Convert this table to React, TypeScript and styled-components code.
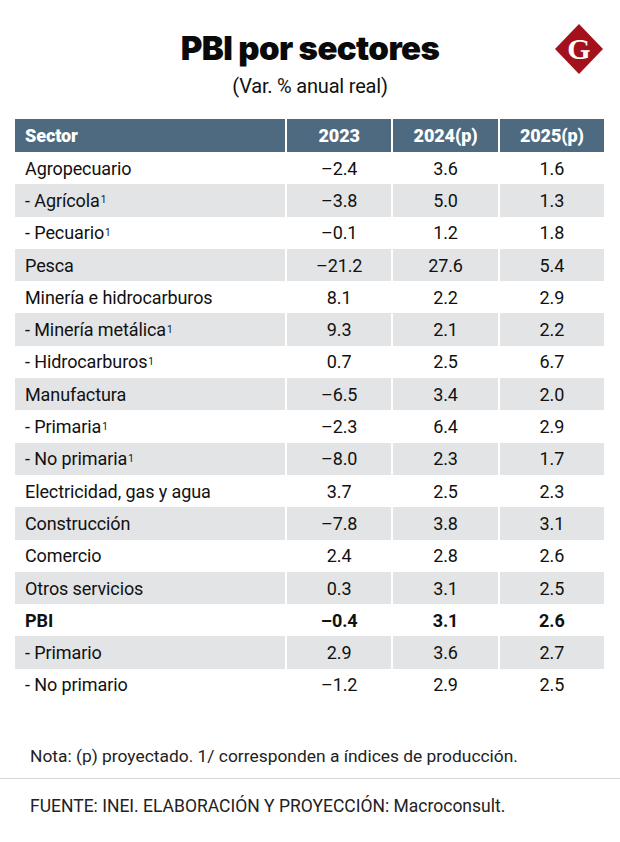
import React from "react";
import styled, { createGlobalStyle } from "styled-components";

const Global = createGlobalStyle`
  html, body { margin: 0; padding: 0; background: #fff; }
  body { font-family: Roboto, "Liberation Sans", sans-serif; color: #111; }
`;

const Page = styled.div`
  width: 620px;
  height: 842px;
  box-sizing: border-box;
  padding-top: 28px;
  display: flex;
  flex-direction: column;
`;

const Head = styled.header`
  position: relative;
  display: flex;
  flex-direction: column;
  align-items: center;
`;

const Title = styled.h1`
  margin: 0;
  font-family: Inter, Lato, "Liberation Sans", sans-serif;
  font-weight: 900;
  font-size: 33px;
  line-height: 40px;
  letter-spacing: -0.6px;
  color: #0a0a0a;
`;

const Subtitle = styled.div`
  margin-top: 6px;
  font-size: 20px;
  line-height: 24px;
  letter-spacing: -0.2px;
  color: #111;
`;

const Logo = styled.svg`
  position: absolute;
  right: 16px;
  top: -5px;
`;

const Table = styled.div`
  margin: 21px 16px 0 15px;
  display: flex;
  flex-direction: column;
`;

const Row = styled.div<{ $shade?: "head" | "gray" | "none" }>`
  display: grid;
  grid-template-columns: 270px 1fr 1fr 1fr;
  column-gap: 2px;
  height: ${(p) => (p.$shade === "head" ? "33px" : "32.3px")};
`;

const Cell = styled.div<{ $shade?: "head" | "gray" | "none"; $first?: boolean; $bold?: boolean }>`
  display: flex;
  align-items: center;
  justify-content: ${(p) => (p.$first ? "flex-start" : "center")};
  padding-left: ${(p) => (p.$first ? "10px" : "0")};
  background: ${(p) =>
    p.$shade === "head" ? "#4e6a81" : p.$shade === "gray" ? "#e2e4e6" : "transparent"};
  color: ${(p) => (p.$shade === "head" ? "#fff" : "#111")};
  font-size: 18px;
  font-weight: ${(p) => (p.$shade === "head" ? 900 : p.$bold ? 700 : 400)};
  letter-spacing: -0.1px;
  white-space: nowrap;
`;

const Sup = styled.sup`
  font-size: 10px;
  line-height: 0;
  vertical-align: 7px;
  margin-left: 1px;
`;

const Note = styled.p`
  margin: 45px 0 0 30px;
  font-size: 17.4px;
  line-height: 20px;
  color: #222;
`;

const Divider = styled.hr`
  margin: 12px 0 0 0;
  border: none;
  border-top: 1px solid #d6d6d6;
`;

const Source = styled.p`
  margin: 17px 0 0 30px;
  font-size: 17.5px;
  line-height: 20px;
  color: #222;
`;

type R = { s: string; sup?: boolean; v: [string, string, string]; bold?: boolean };

const rows: R[] = [
  { s: "Agropecuario", v: ["-2.4", "3.6", "1.6"] },
  { s: "- Agrícola", sup: true, v: ["-3.8", "5.0", "1.3"] },
  { s: "- Pecuario", sup: true, v: ["-0.1", "1.2", "1.8"] },
  { s: "Pesca", v: ["-21.2", "27.6", "5.4"] },
  { s: "Minería e hidrocarburos", v: ["8.1", "2.2", "2.9"] },
  { s: "- Minería metálica", sup: true, v: ["9.3", "2.1", "2.2"] },
  { s: "- Hidrocarburos", sup: true, v: ["0.7", "2.5", "6.7"] },
  { s: "Manufactura", v: ["-6.5", "3.4", "2.0"] },
  { s: "- Primaria", sup: true, v: ["-2.3", "6.4", "2.9"] },
  { s: "- No primaria", sup: true, v: ["-8.0", "2.3", "1.7"] },
  { s: "Electricidad, gas y agua", v: ["3.7", "2.5", "2.3"] },
  { s: "Construcción", v: ["-7.8", "3.8", "3.1"] },
  { s: "Comercio", v: ["2.4", "2.8", "2.6"] },
  { s: "Otros servicios", v: ["0.3", "3.1", "2.5"] },
  { s: "PBI", v: ["-0.4", "3.1", "2.6"], bold: true },
  { s: "- Primario", v: ["2.9", "3.6", "2.7"] },
  { s: "- No primario", v: ["-1.2", "2.9", "2.5"] },
];

export default function App() {
  return (
    <Page>
      <Global />
      <Head>
        <Title>PBI por sectores</Title>
        <Subtitle>(Var. % anual real)</Subtitle>
        <Logo width="50" height="52" viewBox="0 0 50 52">
          <polygon points="25,1 49,26 25,51 1,26" fill="#a3111c" />
          <text
            x="25"
            y="36"
            textAnchor="middle"
            fontFamily="'Liberation Serif', serif"
            fontWeight="700"
            fontSize="30"
            fill="#fff"
          >
            G
          </text>
        </Logo>
      </Head>
      <Table>
        <Row $shade="head">
          <Cell $shade="head" $first>Sector</Cell>
          <Cell $shade="head">2023</Cell>
          <Cell $shade="head">2024(p)</Cell>
          <Cell $shade="head">2025(p)</Cell>
        </Row>
        {rows.map((r, i) => {
          const shade = i % 2 === 1 ? "gray" : "none";
          return (
            <Row key={r.s} $shade={shade}>
              <Cell $shade={shade} $first $bold={r.bold}>
                {r.s}
                {r.sup && <Sup>1</Sup>}
              </Cell>
              {r.v.map((x, j) => (
                <Cell key={j} $shade={shade} $bold={r.bold}>
                  {x.replace("-", "\u2013")}
                </Cell>
              ))}
            </Row>
          );
        })}
      </Table>
      <Note>Nota: (p) proyectado. 1/ corresponden a índices de producción.</Note>
      <Divider />
      <Source>FUENTE: INEI. ELABORACIÓN Y PROYECCIÓN: Macroconsult.</Source>
    </Page>
  );
}
